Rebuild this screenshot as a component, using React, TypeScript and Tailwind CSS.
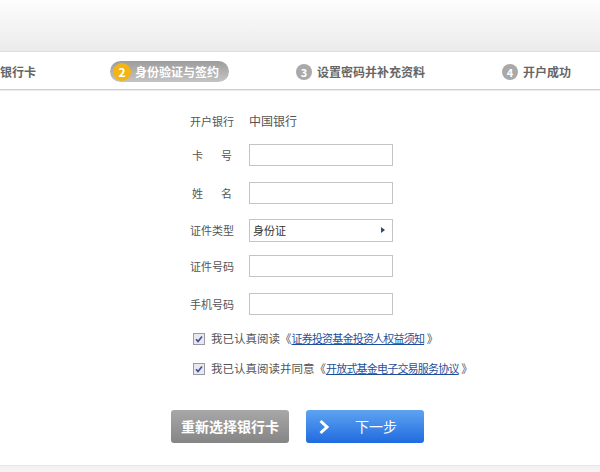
import React from "react";

const font = { fontFamily: '"Noto Sans CJK SC", "Noto Sans", sans-serif' };

function StepDot({ n, active }: { n: number; active?: boolean }) {
  return (
    <span
      className={
        "flex items-center justify-center rounded-full font-bold leading-none text-white " +
        (active ? "h-[18px] w-[18px] bg-[#f4b512] text-[12px]" : "h-[16px] w-[16px] bg-[#a9a9a9] text-[11px]")
      }
    >
      {n}
    </span>
  );
}

function Field({ label, children, className = "" }: { label: React.ReactNode; children: React.ReactNode; className?: string }) {
  return (
    <div className={"flex h-[22px] items-center " + className}>
      <div className="w-[44px] text-[11px] text-[#555]">{label}</div>
      <div className="ml-[15px]">{children}</div>
    </div>
  );
}

function TextInput() {
  return <input className="h-[22px] w-[144px] border border-[#c4c4c4] bg-white outline-none" />;
}

function Check() {
  return (
    <svg width="12" height="12" viewBox="0 0 12 12" className="shrink-0">
      <rect x="0.5" y="0.5" width="11" height="11" fill="#e8e8ee" stroke="#9a9aa4" />
      <path d="M3 6.2 L5 8.4 L9 3.4" fill="none" stroke="#3a4fa0" strokeWidth="1.6" />
    </svg>
  );
}

export default function App() {
  return (
    <div className="h-[472px] w-[600px] overflow-hidden bg-white" style={font}>
      <div className="h-[52px] border-b border-[#dedede] bg-gradient-to-b from-[#fdfdfd] to-[#ebebeb]" />
      <div className="relative h-[38px] border-b border-[#cfcfcf] bg-white text-[12px] font-bold text-[#666] shadow-[0_1px_0_#ececec]">
        <span className="absolute left-0 top-[11px]">银行卡</span>
        <div className="absolute left-[110px] top-[9px] flex h-[21px] w-[119px] items-center gap-[4px] rounded-full bg-gradient-to-b from-[#9d9d9d] to-[#c4c4c4] pl-[3px] text-white">
          <StepDot n={2} active />
          <span>身份验证与签约</span>
        </div>
        <div className="absolute left-[296px] top-[11px] flex items-center gap-[5px]">
          <StepDot n={3} />
          <span>设置密码并补充资料</span>
        </div>
        <div className="absolute left-[502px] top-[11px] flex items-center gap-[5px]">
          <StepDot n={4} />
          <span>开户成功</span>
        </div>
      </div>

      <div className="ml-[190px] pt-[20px]">
        <div className="flex h-[22px] items-center">
          <div className="w-[44px] text-[11px] text-[#555]">开户银行</div>
          <div className="ml-[15px] text-[12px] text-[#555]">中国银行</div>
        </div>
        <Field className="mt-[12px]" label={<span className="flex justify-between px-[2px]"><span>卡</span><span>号</span></span>}>
          <TextInput />
        </Field>
        <Field className="mt-[16px]" label={<span className="flex justify-between px-[2px]"><span>姓</span><span>名</span></span>}>
          <TextInput />
        </Field>
        <Field className="mt-[15px]" label="证件类型">
          <div className="flex h-[23px] w-[144px] items-center justify-between border border-[#c4c4c4] bg-white pl-[3px] pr-[7px] text-[11px] text-[#333]">
            <span>身份证</span>
            <span className="h-0 w-0 border-y-[3.5px] border-l-[4px] border-y-transparent border-l-[#2f4a6a]" />
          </div>
        </Field>
        <Field className="mt-[14px]" label="证件号码">
          <TextInput />
        </Field>
        <Field className="mt-[16px]" label="手机号码">
          <TextInput />
        </Field>

        <div className="mt-[18px] flex flex-col gap-[18px] pl-[3px] text-[11.5px] text-[#555]">
          <div className="flex h-[12px] items-center gap-[6px]">
            <Check />
            <span className="whitespace-nowrap">
              我已认真阅读《<a className="text-[11px] tracking-[-0.8px] text-[#1f4f9a] underline">证券投资基金投资人权益须知</a> 》
            </span>
          </div>
          <div className="flex h-[12px] items-center gap-[6px]">
            <Check />
            <span className="whitespace-nowrap">
              我已认真阅读并同意《<a className="text-[11px] tracking-[-0.8px] text-[#1f4f9a] underline">开放式基金电子交易服务协议</a> 》
            </span>
          </div>
        </div>
      </div>

      <div className="ml-[171px] mt-[35px] flex gap-[17px]">
        <button className="flex h-[33px] w-[118px] items-center justify-center rounded-[3px] bg-gradient-to-b from-[#a8a8a8] to-[#858585] text-[14px] font-bold text-white">
          重新选择银行卡
        </button>
        <button className="relative flex h-[33px] w-[118px] items-center rounded-[3px] bg-gradient-to-b from-[#5ea3f0] to-[#1f6ae0] text-[14px] text-white">
          <svg width="12" height="16" viewBox="0 0 12 16" className="ml-[12px]">
            <path d="M2.5 2 L9 8 L2.5 14" fill="none" stroke="white" strokeWidth="3" />
          </svg>
          <span className="ml-[25px]">下一步</span>
        </button>
      </div>

      <div className="mt-[22px] h-[10px] border-t border-[#e6e6e6] bg-[#f3f3f3]" />
    </div>
  );
}
